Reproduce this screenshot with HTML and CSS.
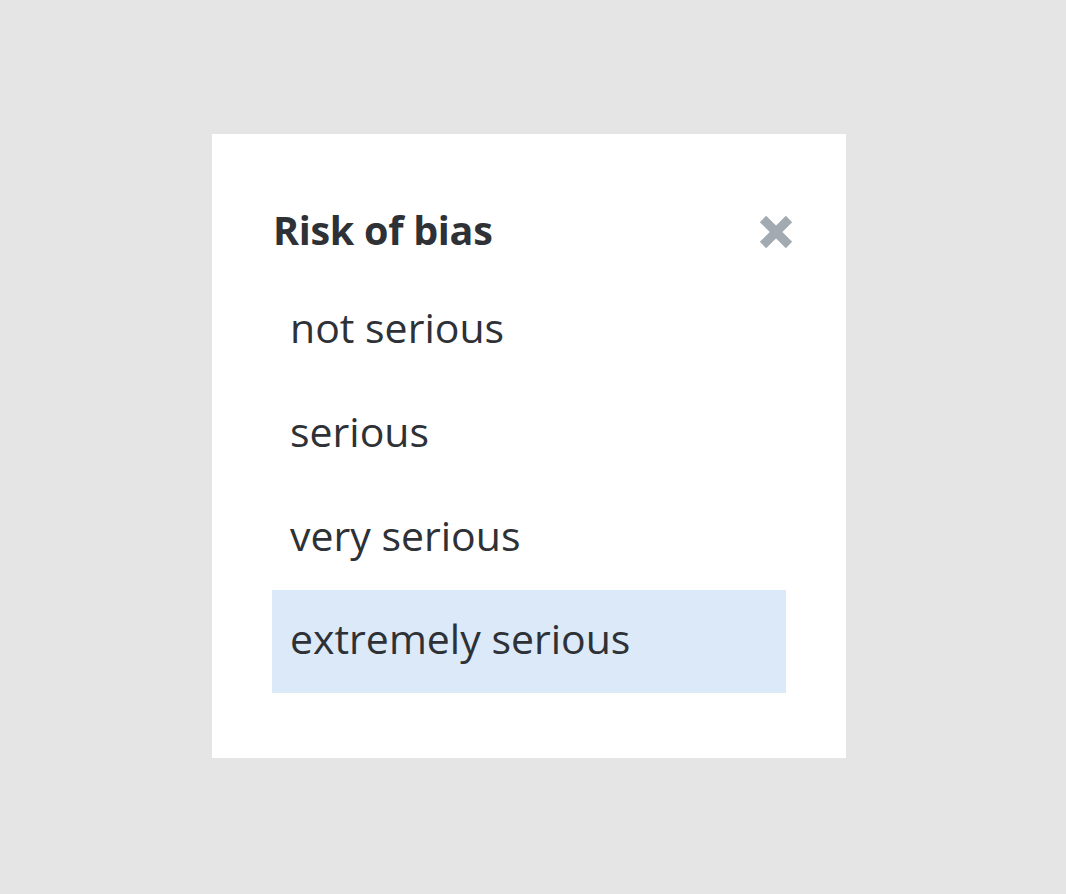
FILE: index.html
```html
<!DOCTYPE html>
<html lang="en">
<head>
    <meta charset="UTF-8">
    <title>Risk of bias</title>
    <link rel="stylesheet" href="styles.css">
</head>
<body>
    <div class="panel">
        <div class="panel-header">
            <h2 class="panel-title">Risk of bias</h2>
            <button class="close-btn" aria-label="Close">
                <svg width="36" height="36" viewBox="0 0 36 36">
                    <path d="M5 5 L31 31 M31 5 L5 31" stroke="#a2aab2" stroke-width="9" stroke-linecap="butt"/>
                </svg>
            </button>
        </div>
        <ul class="options">
            <li class="option">not serious</li>
            <li class="option">serious</li>
            <li class="option">very serious</li>
            <li class="option selected">extremely serious</li>
        </ul>
    </div>
</body>
</html>
```

FILE: styles.css
```css
* {
    margin: 0;
    padding: 0;
    box-sizing: border-box;
}

body {
    width: 1066px;
    height: 894px;
    background: #e5e5e5;
    font-family: 'Open Sans', 'Noto Sans', sans-serif;
    color: #2e3136;
    display: flex;
    align-items: flex-start;
    padding: 134px 0 0 212px;
}

.panel {
    width: 634px;
    height: 624px;
    background: #fff;
    padding: 70px 60px 0 60px;
}

.panel-header {
    display: flex;
    justify-content: space-between;
    align-items: center;
    height: 56px;
}

.panel-title {
    font-size: 39.5px;
    font-weight: 700;
    letter-spacing: -0.3px;
    padding-left: 1px;
    margin-top: -4px;
}

.close-btn {
    border: none;
    background: none;
    width: 36px;
    height: 36px;
    margin-right: -8px;
    cursor: pointer;
}

.options {
    list-style: none;
    margin-top: 18px;
}

.option {
    height: 104px;
    display: flex;
    align-items: center;
    padding: 0 0 7px 18px;
    font-size: 41px;
}

.option.selected {
    background: #dce9f9;
    height: 103px;
}
```
